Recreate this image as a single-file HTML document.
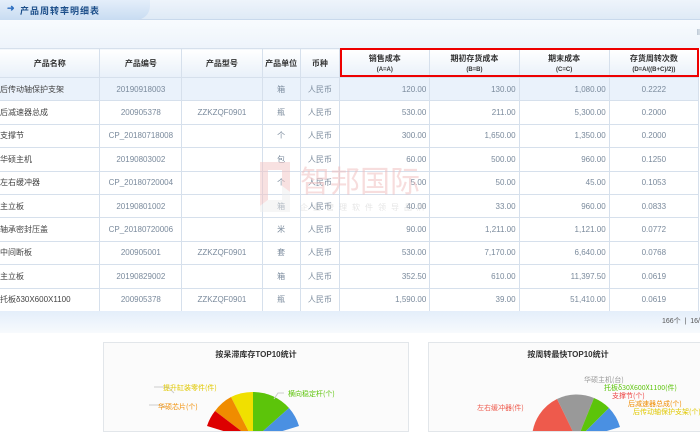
<!DOCTYPE html><html><head><meta charset="utf-8"><style>
*{margin:0;padding:0;box-sizing:border-box}
body{width:700px;height:427px;overflow:hidden;background:#fff;font-family:"Liberation Sans","Noto Sans CJK SC",sans-serif;position:relative;font-size:8px;color:#333}
.top{position:absolute;left:0;top:0;width:700px;height:20px;background:linear-gradient(#eef4fb,#dfeaf6);border-bottom:1px solid #c9d9ec}
.tab{position:absolute;left:0;top:0;width:150px;height:20px;background:linear-gradient(#e4eefa,#c8dcf2);border-radius:0 0 14px 0;font-size:9px;font-weight:bold;color:#1d4f8a;padding:4px 0 0 20px;letter-spacing:1px}
.tab:before{content:"➜";position:absolute;left:7px;top:3px;color:#2f6fc0;font-size:9px}
.bar{position:absolute;left:0;top:20px;width:700px;height:28px;background:linear-gradient(#f8fbfe,#eef4fb)}
table{position:absolute;left:-1px;top:48px;border-collapse:collapse;table-layout:fixed}
td,th{border:1px solid #d6e0ec;height:23.4px;text-align:center;color:#7a8a9c;font-weight:normal;white-space:nowrap;overflow:hidden}
th{height:29px;background:linear-gradient(#fff,#e8f0f9);color:#333;font-weight:bold;font-size:8px}
th small{display:block;font-size:6px;margin-top:3px}
td.l{text-align:left;color:#444}
td.r{text-align:right;padding-right:3px}
tr.h td{background:#eaf2fb}
.red{position:absolute;left:340px;top:48px;width:359px;height:29px;border:2px solid #e00}
.pg{position:absolute;left:0;top:311px;width:700px;height:22px;background:linear-gradient(#e4eefa,#f7fafd);font-size:7px;color:#555;text-align:right;padding:5px 0 0 0}
.box{position:absolute;top:342px;height:90px;border:1px solid #e2e6ea;background:#fbfbfb;overflow:hidden}
.box h4{text-align:center;font-size:8px;margin-top:6px;color:#333}
.wm{position:absolute;left:260px;top:162px;opacity:.5}
</style></head><body>
<div class="top"><div class="tab">产品周转率明细表</div></div>
<div class="bar"><span style="position:absolute;right:0;top:8px;color:#9ab">ǁ</span></div>
<table>
<colgroup><col width="101"><col width="82"><col width="81"><col width="38"><col width="40"><col width="91"><col width="90"><col width="91"><col width="90"></colgroup>
<tr><th>产品名称</th><th>产品编号</th><th>产品型号</th><th>产品单位</th><th>币种</th><th>销售成本<small>(A=A)</small></th><th>期初存货成本<small>(B=B)</small></th><th>期末成本<small>(C=C)</small></th><th>存货周转次数<small>(D=A/((B+C)/2))</small></th></tr>
<tr class="h"><td class="l">后传动轴保护支架</td><td>20190918003</td><td></td><td>箱</td><td>人民币</td><td class="r">120.00</td><td class="r">130.00</td><td class="r">1,080.00</td><td>0.2222</td></tr>
<tr><td class="l">后减速器总成</td><td>200905378</td><td>ZZKZQF0901</td><td>瓶</td><td>人民币</td><td class="r">530.00</td><td class="r">211.00</td><td class="r">5,300.00</td><td>0.2000</td></tr>
<tr><td class="l">支撑节</td><td>CP_20180718008</td><td></td><td>个</td><td>人民币</td><td class="r">300.00</td><td class="r">1,650.00</td><td class="r">1,350.00</td><td>0.2000</td></tr>
<tr><td class="l">华硕主机</td><td>20190803002</td><td></td><td>包</td><td>人民币</td><td class="r">60.00</td><td class="r">500.00</td><td class="r">960.00</td><td>0.1250</td></tr>
<tr><td class="l">左右缓冲器</td><td>CP_20180720004</td><td></td><td>个</td><td>人民币</td><td class="r">5.00</td><td class="r">50.00</td><td class="r">45.00</td><td>0.1053</td></tr>
<tr><td class="l">主立板</td><td>20190801002</td><td></td><td>箱</td><td>人民币</td><td class="r">40.00</td><td class="r">33.00</td><td class="r">960.00</td><td>0.0833</td></tr>
<tr><td class="l">轴承密封压盖</td><td>CP_20180720006</td><td></td><td>米</td><td>人民币</td><td class="r">90.00</td><td class="r">1,211.00</td><td class="r">1,121.00</td><td>0.0772</td></tr>
<tr><td class="l">中间断板</td><td>200905001</td><td>ZZKZQF0901</td><td>套</td><td>人民币</td><td class="r">530.00</td><td class="r">7,170.00</td><td class="r">6,640.00</td><td>0.0768</td></tr>
<tr><td class="l">主立板</td><td>20190829002</td><td></td><td>箱</td><td>人民币</td><td class="r">352.50</td><td class="r">610.00</td><td class="r">11,397.50</td><td>0.0619</td></tr>
<tr><td class="l">托板δ30X600X1100</td><td>200905378</td><td>ZZKZQF0901</td><td>瓶</td><td>人民币</td><td class="r">1,590.00</td><td class="r">39.00</td><td class="r">51,410.00</td><td>0.0619</td></tr>
</table>
<div class="red"></div>
<div class="wm"><svg width="200" height="60"><path d="M0 0h30v30l-8-6V8H8v30l-8 6z" fill="#f3c4c4"/><path d="M0 44l8-6h14v-14l8 6v20H0z" fill="#eee"/><text x="40" y="30" font-size="30" fill="#f0bcbc" font-family="Noto Sans CJK SC">智邦国际</text><text x="40" y="48" font-size="8" fill="#ccc" letter-spacing="5" font-family="Noto Sans CJK SC">企业管理软件领导品牌</text></svg></div>
<div class="pg">166个 &nbsp;|&nbsp; 16/</div>
<div class="box" style="left:103px;width:306px"><h4>按呆滞库存TOP10统计</h4>
<svg width="306" height="90" style="position:absolute;left:0;top:0"><g transform="translate(149,97)"><path d="M0 0V-48A48 48 0 0 1 36 -32z" fill="#5cc40a"/><path d="M0 0L36 -32A48 48 0 0 1 46 -14z" fill="#4a90e2"/><path d="M0 0V-48A48 48 0 0 0 -22 -43z" fill="#f0e000"/><path d="M0 0L-22 -43A48 48 0 0 0 -38 -29z" fill="#f08c00"/><path d="M0 0L-38 -29A48 48 0 0 0 -46 -14z" fill="#d00"/></g>
<path d="M180 50h-6l-4 6M50 44h14l6 6M45 62h10l6 2" stroke="#ccc" fill="none"/>
<text x="184" y="53" font-size="7" fill="#5cc40a" font-family="Noto Sans CJK SC">横向稳定杆(个)</text>
<text x="59" y="47" font-size="7" fill="#e0c800" font-family="Noto Sans CJK SC">提升缸装零件(件)</text>
<text x="54" y="66" font-size="7" fill="#f08c00" font-family="Noto Sans CJK SC">华硕芯片(个)</text></svg></div>
<div class="box" style="left:428px;width:280px"><h4>按周转最快TOP10统计</h4>
<svg width="280" height="90" style="position:absolute;left:0;top:0"><g transform="translate(148,97)"><path d="M0 0L-20 -41A45 45 0 0 1 17 -42z" fill="#999"/><path d="M0 0L17 -42A45 45 0 0 1 32 -32z" fill="#5cc40a"/><path d="M0 0L32 -32A45 45 0 0 1 43 -13z" fill="#4a90e2"/><path d="M0 0L-20 -41A45 45 0 0 0 -45 -3z" fill="#ee5a4c"/></g>
<text x="155" y="39" font-size="7" fill="#999" font-family="Noto Sans CJK SC">华硕主机(台)</text>
<text x="175" y="47" font-size="7" fill="#5cc40a" font-family="Noto Sans CJK SC">托板δ30X600X1100(件)</text>
<text x="183" y="55" font-size="7" fill="#e44" font-family="Noto Sans CJK SC">支撑节(个)</text>
<text x="199" y="63" font-size="7" fill="#f08c00" font-family="Noto Sans CJK SC">后减速器总成(个)</text>
<text x="204" y="71" font-size="7" fill="#e0c800" font-family="Noto Sans CJK SC">后传动轴保护支架(个)</text>
<text x="48" y="67" font-size="7" fill="#ee5a4c" font-family="Noto Sans CJK SC">左右缓冲器(件)</text></svg></div>
</body></html>
